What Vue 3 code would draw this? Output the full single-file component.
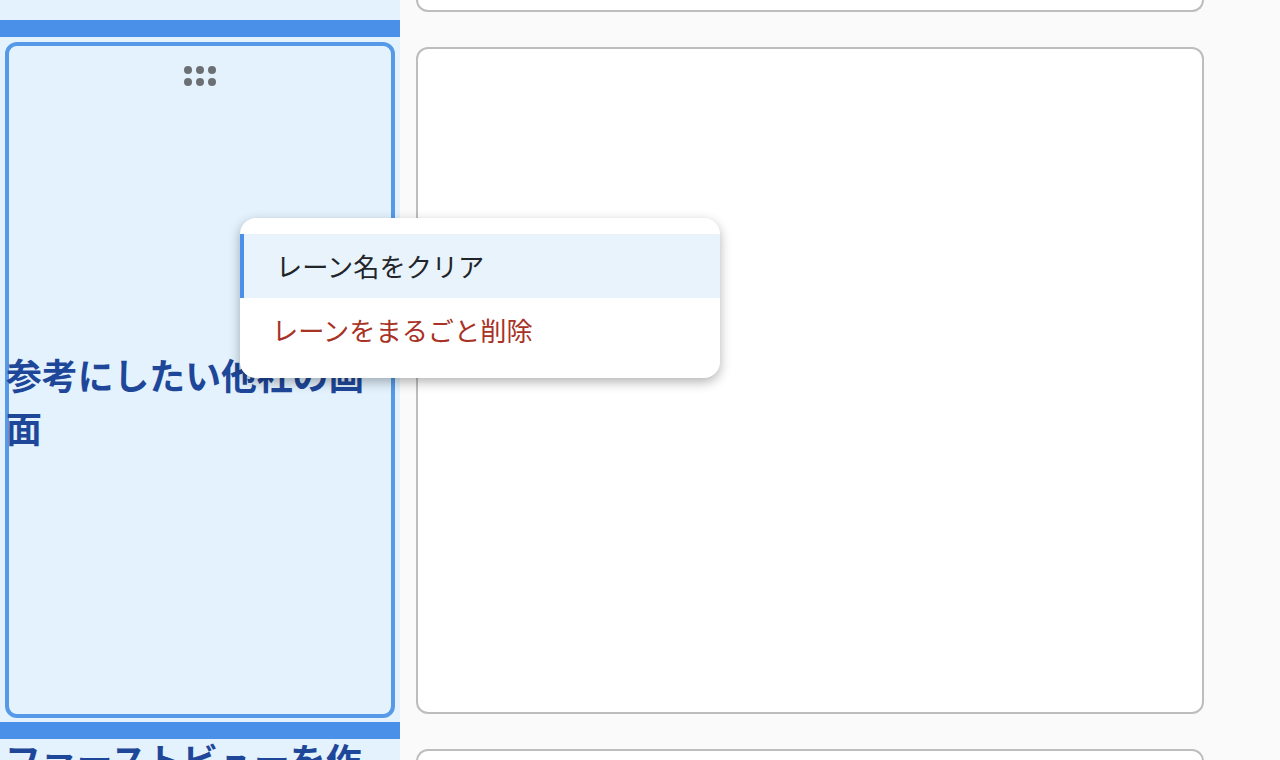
<script setup>
const menuItems = [
  { label: 'レーン名をクリア', active: true },
  { label: 'レーンをまるごと削除', danger: true },
]
</script>

<template>
  <div class="board">
    <aside class="side">
      <div class="side-top"></div>
      <div class="bar"></div>
      <section class="lane">
        <div class="handle">
          <svg width="34" height="22" viewBox="0 0 34 22" fill="#6c7074">
            <circle cx="5" cy="5" r="4" /><circle cx="17" cy="5" r="4" /><circle cx="29" cy="5" r="4" />
            <circle cx="5" cy="17" r="4" /><circle cx="17" cy="17" r="4" /><circle cx="29" cy="17" r="4" />
          </svg>
        </div>
        <div class="lane-body">
          <h2 class="lane-title">参考にしたい他社の画面</h2>
        </div>
      </section>
      <div class="bar bar-low"></div>
      <h2 class="next-title">ファーストビューを作成</h2>
    </aside>
    <main class="cards">
      <div class="card card-stub"></div>
      <div class="card card-main"></div>
      <div class="card card-next"></div>
    </main>
    <ul class="menu">
      <li
        v-for="item in menuItems"
        :key="item.label"
        class="menu-item"
        :class="{ active: item.active, danger: item.danger }"
      >{{ item.label }}</li>
    </ul>
  </div>
</template>

<style>
html, body { margin: 0; background: #fafafa; }
</style>

<style scoped>
.board {
  position: relative;
  display: flex;
  width: 1280px;
  height: 760px;
  overflow: hidden;
  background: #fafafa;
  font-family: "Noto Sans CJK JP", "Noto Sans", sans-serif;
}
.side {
  flex: 0 0 400px;
  display: flex;
  flex-direction: column;
  background: #e3f2fd;
}
.side-top { flex: 0 0 20px; }
.bar { flex: 0 0 17px; background: #4a90e8; }
.bar-low { margin-top: 4px; }
.lane {
  flex: 0 0 676px;
  box-sizing: border-box;
  margin: 5px 5px 0;
  display: flex;
  flex-direction: column;
  border: 4px solid #5599e8;
  border-radius: 12px;
}
.handle {
  flex: 0 0 42px;
  display: flex;
  justify-content: center;
  align-items: flex-start;
  padding-top: 19px;
  box-sizing: border-box;
}
.lane-body {
  flex: 1;
  display: flex;
  align-items: center;
  margin-left: -3px;
}
.lane-title, .next-title {
  margin: 0;
  color: #1e4799;
  font-size: 35.84px;
  font-weight: 700;
  line-height: 53px;
}
.next-title {
  padding: 0 34px 0 5px;
  line-height: 40px;
}
.cards {
  flex: 1;
  display: flex;
  flex-direction: column;
  gap: 35px;
  padding-left: 16px;
  padding-right: 76px;
}
.card {
  box-sizing: border-box;
  flex: none;
  background: #fff;
  border: 2px solid #bdbdbd;
  border-radius: 12px;
}
.card-stub { height: 12px; border-top: 0; border-radius: 0 0 12px 12px; }
.card-main { height: 667px; }
.card-next { height: 100px; }
.menu {
  position: absolute;
  left: 240px;
  top: 218px;
  width: 480px;
  box-sizing: border-box;
  margin: 0;
  padding: 16px 0;
  list-style: none;
  background: #fff;
  border-radius: 16px;
  box-shadow: 0 4px 12px rgba(0, 0, 0, 0.3);
}
.menu-item {
  height: 64px;
  box-sizing: border-box;
  padding-left: 32px;
  font-size: 26.2px;
  line-height: 64px;
  color: #212529;
}
.menu-item.active {
  background: #e8f3fc;
  border-left: 4px solid #4a90e8;
}
.menu-item.danger { color: #a93226; }
</style>
